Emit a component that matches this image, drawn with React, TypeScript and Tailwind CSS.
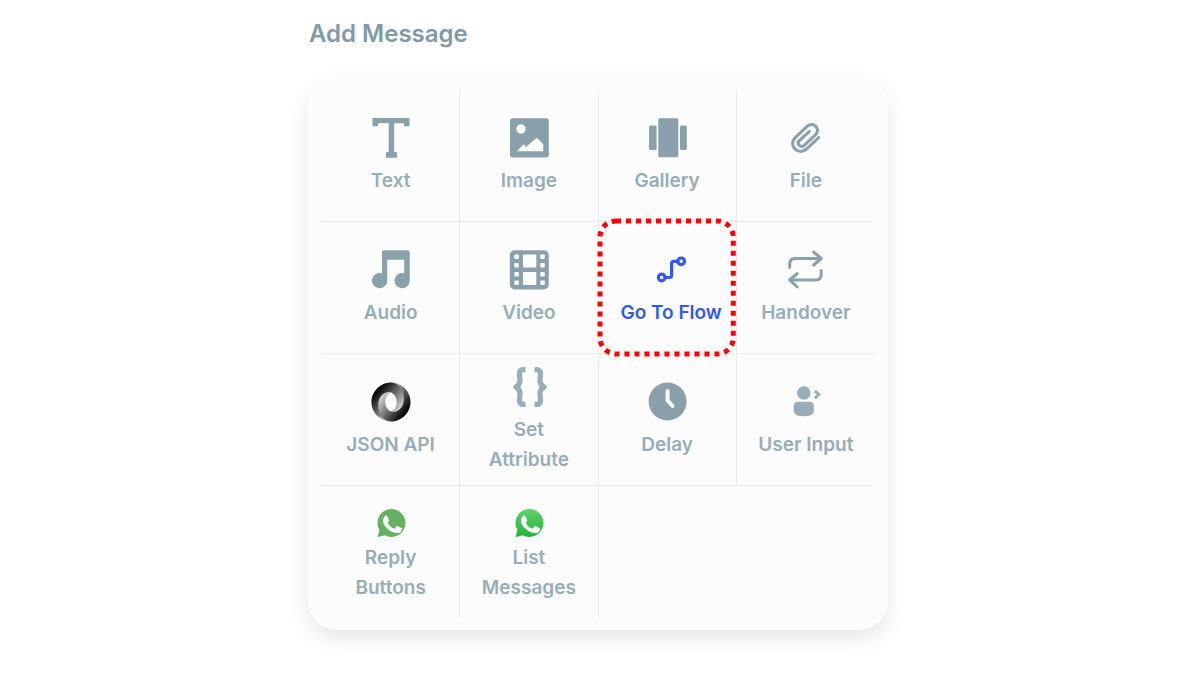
import React from "react";

type IconProps = { children: React.ReactNode };

function Glyph({ children }: IconProps) {
  return (
    <svg viewBox="0 0 40 40" className="size-10 shrink-0" fill="currentColor" aria-hidden="true">
      {children}
    </svg>
  );
}

const TextIcon = () => (
  <Glyph>
    <path d="M1.500 0h37v8.300h-5.500v-3H23.200V34h2.800v5.800H15V34h2.700V5.300H7v3H1.500z" />
  </Glyph>
);

const ImageIcon = () => (
  <Glyph>
    <rect x="1" y="0.200" width="38.800" height="39.200" rx="2.500" />
    <circle cx="12" cy="11" r="4.700" fill="#fcfcfc" />
    <path d="M8 33.300 14.700 26.300l2.300 2.700L27.700 19.700l6.600 6.600v7z" fill="#fcfcfc" />
  </Glyph>
);

const GalleryIcon = () => (
  <Glyph>
    <rect x="2" y="7.600" width="7.600" height="24.400" rx="1.500" />
    <rect x="11.300" y="0.300" width="20" height="39" rx="1.500" />
    <rect x="33" y="7.600" width="6.800" height="24.400" rx="1.500" />
  </Glyph>
);

const FileIcon = () => (
  <Glyph>
    <path
      d="M32.700 19.500 21 30.700c-3.600 3.500-8.500 3.800-11.900.5s-3.300-8 .1-11.500L20.500 8.900c2.900-2.800 6.600-3.100 9.200-.6s2.300 6-.4 8.700L18.500 27.100c-1.600 1.500-3.800 1.700-5.200.3s-1.300-3.400.3-5L23.400 13.300"
      fill="none" stroke="currentColor" strokeWidth="3.100" strokeLinecap="round"
    />
  </Glyph>
);

const AudioIcon = () => (
  <Glyph>
    <path d="M13.500.3h22.700a2.500 2.500 0 0 1 2.500 2.500V30.700a7.600 7.600 0 1 1-5.500-7.300V9.700H16.200v21a7.600 7.600 0 1 1-5.200-7.300V2.800A2.500 2.500 0 0 1 13.500.3z" />
  </Glyph>
);

const VideoIcon = () => (
  <Glyph>
    <rect x="0.800" y="0.200" width="39" height="39.300" rx="5" />
    <g fill="#fcfcfc">
      <rect x="14" y="4.500" width="13.300" height="13" />
      <rect x="14" y="22" width="13.300" height="13" />
      {[4.5, 13, 22, 30.5].map((y) => (
        <React.Fragment key={y}>
          <rect x="5.300" y={y} width="4.500" height="4.500" rx="1" />
          <rect x="31.300" y={y} width="4.500" height="4.500" rx="1" />
        </React.Fragment>
      ))}
    </g>
  </Glyph>
);

const FlowIcon = () => (
  <Glyph>
    <g fill="none" stroke="currentColor" strokeWidth="3.200">
      <circle cx="10.700" cy="27.500" r="3.300" />
      <circle cx="30.200" cy="11.300" r="3.300" />
      <path d="M14.400 27.500h4.300q1.900 0 1.900-2V13.500q0-2.200 2-2.200H26.900" />
    </g>
  </Glyph>
);

const HandoverIcon = () => (
  <Glyph>
    <g fill="none" stroke="currentColor" strokeWidth="3" strokeLinecap="round" strokeLinejoin="round">
      <path d="M3.700 17.500v-3.500q0-5.500 5.500-5.500H34.200M27.700 2l7.500 6.500-7.500 6.500" />
      <path d="M35.200 20.500v3.500q0 6-5.500 6H4.200M11.200 23.500l-7.500 6.500L11.200 37" />
    </g>
  </Glyph>
);

const JsonIcon = () => (
  <svg viewBox="0 0 164 164" className="size-10 shrink-0" aria-hidden="true">
    <defs>
      <linearGradient id="json-left" gradientUnits="userSpaceOnUse" x1="28" y1="36" x2="112" y2="112">
        <stop offset="0" stopColor="#0c0c0c" />
        <stop offset="1" stopColor="#d0d0d0" />
      </linearGradient>
      <linearGradient id="json-right" gradientUnits="userSpaceOnUse" x1="132" y1="124" x2="44" y2="60">
        <stop offset="0" stopColor="#0c0c0c" />
        <stop offset="1" stopColor="#c8c8c8" />
      </linearGradient>
    </defs>
    <g transform="translate(2 2)">
      <path fill="url(#json-left)" d="M79.865 119.100c35.398 48.255 70.040-13.469 69.989-50.587C149.794 24.627 105.312.1 79.836.1 38.943.1 0 33.896 0 80.135 0 131.531 44.640 160 79.836 160c-7.965-1.147-34.507-6.834-34.863-67.967-.24-41.346 13.487-57.865 34.805-50.599.477.177 23.514 9.265 23.514 38.951 0 29.560-23.427 38.715-23.427 38.715z" />
      <path fill="url(#json-right)" d="M79.823 41.400C56.433 33.340 27.780 52.618 27.780 91.230c0 63.048 46.720 68.770 52.384 68.770C121.057 160 160 126.204 160 79.965 160 28.569 115.360.1 80.164.1c9.748-1.350 52.541 10.550 52.541 69.037 0 38.141-31.953 58.905-52.735 50.033-.477-.177-23.514-9.265-23.514-38.951 0-29.560 23.367-38.819 23.367-38.819z" />
    </g>
  </svg>
);

const AttributeIcon = () => (
  <Glyph>
    <g fill="none" stroke="#98adb7" strokeWidth="5.200" strokeLinejoin="round">
      <path d="M16.500 2.600h-2q-4 0-4 4l.5 6.900Q11 18 6.800 20q4.200 2 4.200 6.500L10.500 33.400q0 4 4 4h2" />
      <path d="M25.500 2.600h2q4 0 4 4l-.5 6.900q0 4.500 4.200 6.500-4.200 2-4.200 6.500l.5 6.900q0 4-4 4h-2" />
    </g>
  </Glyph>
);

const DelayIcon = () => (
  <Glyph>
    <circle cx="20.600" cy="19.500" r="19" />
    <path d="M20.600 9v9.500l5 5.500" fill="none" stroke="#fcfcfc" strokeWidth="4" strokeLinecap="round" strokeLinejoin="round" />
  </Glyph>
);

const UserInputIcon = () => (
  <Glyph>
    <g fill="#98adb7">
      <circle cx="17.800" cy="11" r="6.700" />
      <path d="M11.800 19.700h12q4 0 4 4v5.500q0 5-10 5t-10-5v-5.500q0-4 4-4z" />
      <path d="m28.800 8.800 4 3.700-4 3.700" fill="none" stroke="#98adb7" strokeWidth="3" />
    </g>
  </Glyph>
);

function WhatsAppIcon({ id, from, to }: { id: string; from: string; to: string }) {
  return (
    <svg viewBox="0 0 40 40" className="size-10 shrink-0" aria-hidden="true">
      <defs>
        <linearGradient id={id} x1="0" y1="0" x2="0" y2="1">
          <stop offset="0" stopColor={from} />
          <stop offset="1" stopColor={to} />
        </linearGradient>
      </defs>
      <path d="M6.200 34.500 7 27A14 14 0 1 1 14 33.200z" fill="#fff" stroke="#fff" strokeWidth="5" strokeLinejoin="round" className="drop-shadow-xs" />
      <path d="M6.500 34.200l1.900-7A14 14 0 1 1 13.700 32.300z" fill={`url(#${id})`} />
      <path
        d="M13.700 13.200c.8-.9 1.800-1 2.600-.1l1.800 3.900c.3.800-.2 1.400-1.400 2.800 1.500 3 3.600 4.800 6.600 6l2-2.300c.4-.5.9-.5 1.500-.3l3.800 1.900c.7.4.5 1.300.1 2.300-1 2.200-3.700 3.100-6.100 2.600-5.800-1.300-10-5.200-12.200-10-.9-2.600-.4-5 1.300-6.800z"
        fill="#fff"
      />
    </svg>
  );
}

type Item = { label: string; icon: React.ReactNode; cell: string };

const items: Item[] = [
  { label: "Text", icon: <TextIcon />, cell: "border-r border-b" },
  { label: "Image", icon: <ImageIcon />, cell: "border-r border-b" },
  { label: "Gallery", icon: <GalleryIcon />, cell: "border-r border-b" },
  { label: "File", icon: <FileIcon />, cell: "border-b" },
  { label: "Audio", icon: <AudioIcon />, cell: "border-r border-b" },
  { label: "Video", icon: <VideoIcon />, cell: "border-r border-b" },
  { label: "Go To Flow", icon: <FlowIcon />, cell: "border-r border-b" },
  { label: "Handover", icon: <HandoverIcon />, cell: "border-b" },
  { label: "JSON API", icon: <JsonIcon />, cell: "border-r border-b" },
  { label: "Set Attribute", icon: <AttributeIcon />, cell: "border-r border-b" },
  { label: "Delay", icon: <DelayIcon />, cell: "border-r border-b" },
  { label: "User Input", icon: <UserInputIcon />, cell: "border-b" },
  { label: "Reply Buttons", icon: <WhatsAppIcon id="wa-reply" from="#66b062" to="#66b062" />, cell: "border-r" },
  { label: "List Messages", icon: <WhatsAppIcon id="wa-list" from="#5ed266" to="#24b33c" />, cell: "border-r" },
];

function Highlight() {
  return (
    <div className="pointer-events-none absolute -top-1 right-0 -bottom-1 -left-0.5 p-[3px]">
      <svg className="size-full overflow-visible" aria-hidden="true">
        <rect width="100%" height="100%" rx="16" fill="none" stroke="#f00" strokeWidth="5" strokeDasharray="5 5" />
      </svg>
    </div>
  );
}

export default function App() {
  return (
    <main className="min-h-screen bg-white px-4 pt-4 pb-11 font-['Inter','Liberation_Sans',sans-serif]">
      <div className="mx-auto max-w-[580px]">
        <h1 className="pl-px text-2xl leading-9 font-semibold text-[#829aa5]">Add Message</h1>
        <ul className="mt-[26px] grid auto-rows-[minmax(132px,auto)] grid-cols-4 rounded-[28px] bg-[#fcfcfc] py-3 pr-[13px] pl-[14px] shadow-[0_8px_20px_rgba(0,0,0,0.10)]">
          {items.map(({ label, icon, cell }) => {
            const active = label === "Go To Flow";
            const messaging = label === "Reply Buttons" || label === "List Messages";
            return (
              <li key={label} className={`relative border-[#ebebeb] ${cell}`}>
                <button
                  type="button"
                  className={`flex size-full cursor-pointer flex-col items-center justify-center pt-0.5 text-[19px] leading-[30px] font-semibold ${
                    active ? "pl-2 text-[#3159ee]" : "text-[#8aa0ab]"
                  } ${messaging ? "" : "gap-2"}`}
                >
                  {icon}
                  <span className={`${active ? "whitespace-nowrap" : "text-[#98adb7]"} ${label.length > 10 ? "max-w-24" : ""}`}>
                    {label}
                  </span>
                </button>
                {active && <Highlight />}
              </li>
            );
          })}
        </ul>
      </div>
    </main>
  );
}
